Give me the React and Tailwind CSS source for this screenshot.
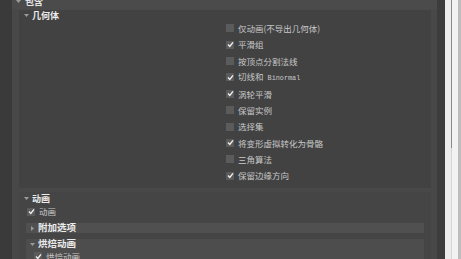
const cjk = { fontFamily: '"Noto Sans CJK SC", "Noto Sans", sans-serif' };

function Caret({ open }) {
  return (
    <svg width="5" height="5" viewBox="0 0 5 5" className="shrink-0">
      {open ? <path d="M0 1 L5 1 L2.5 4 Z" fill="#9a9a9a" /> : <path d="M1 0 L4 2.5 L1 5 Z" fill="#9a9a9a" />}
    </svg>
  );
}

function Box({ checked }) {
  return (
    <div className="w-[8px] h-[8px] bg-[#5b5b5b] flex items-center justify-center shrink-0">
      {checked && (
        <svg width="7" height="7" viewBox="0 0 7 7">
          <path d="M1 3.6 L2.8 5.4 L6 1.4" stroke="#f0f0f0" strokeWidth="1.4" fill="none" />
        </svg>
      )}
    </div>
  );
}

const options = [
  { label: "仅动画(不导出几何体)", checked: false },
  { label: "平滑组", checked: true },
  { label: "按顶点分割法线", checked: false },
  { label: "切线和", mono: "Binormal", checked: true },
  { label: "涡轮平滑", checked: true },
  { label: "保留实例", checked: false },
  { label: "选择集", checked: false },
  { label: "将变形虚拟转化为骨骼", checked: true },
  { label: "三角算法", checked: false },
  { label: "保留边缘方向", checked: true },
];

export default function App() {
  return (
    <div className="w-[461px] h-[259px] overflow-hidden bg-[#3a3a3a] flex" style={cjk}>
      <div className="w-[12px] shrink-0" />
      <div className="w-[425px] shrink-0 flex flex-col bg-[#484848] overflow-hidden">
        <div className="h-[15px] shrink-0 -mt-[6px] flex items-center pl-[4px] gap-[4px] text-[9px] font-bold text-[#e6e6e6] bg-[#4b4b4b]">
          <Caret open />
          <span className="leading-none">包含</span>
        </div>
        <div className="flex-1 min-h-0 flex flex-col pl-[7px] pr-[6px]">
          <div className="h-[179px] shrink-0 bg-[#424242] border-t border-[#4a4a4a] flex flex-col">
            <div className="h-[10px] shrink-0 flex items-center pl-[5px] gap-[3px] text-[9px] font-bold text-[#ececec]">
              <Caret open />
              <span className="leading-none">几何体</span>
            </div>
            <div className="flex flex-col pl-[207px]">
              {options.map((o) => (
                <div key={o.label} className="h-[16.4px] shrink-0 flex items-center gap-[4px] text-[8.5px] text-[#c8c8c8]">
                  <Box checked={o.checked} />
                  <span className="leading-none whitespace-nowrap">
                    {o.label}
                    {o.mono && (
                      <span className="text-[6.8px]" style={{ fontFamily: '"Liberation Mono", monospace' }}>
                        {" "}{o.mono}
                      </span>
                    )}
                  </span>
                </div>
              ))}
            </div>
          </div>
          <div className="mt-[4px] flex-1 min-h-0 overflow-hidden bg-[#454545] flex flex-col">
            <div className="h-[13px] shrink-0 flex items-center pl-[5px] gap-[3px] text-[9px] font-bold text-[#ececec]">
              <Caret open />
              <span className="leading-none">动画</span>
            </div>
            <div className="h-[13px] shrink-0 flex items-center pl-[8px] gap-[4px] text-[8.5px] text-[#c8c8c8]">
              <Box checked />
              <span className="leading-none">动画</span>
            </div>
            <div className="mt-[5px] ml-[7px] mr-[7px] h-[10px] shrink-0 bg-[#505050] flex items-center pl-[4px] gap-[3px] text-[9.5px] font-bold text-[#ececec]">
              <Caret />
              <span className="leading-none">附加选项</span>
            </div>
            <div className="mt-[6px] ml-[7px] mr-[7px] shrink-0 h-[40px] bg-[#4d4d4d] flex flex-col">
              <div className="h-[10px] shrink-0 flex items-center pl-[4px] gap-[3px] text-[9.5px] font-bold text-[#ececec]">
                <Caret open />
                <span className="leading-none">烘焙动画</span>
              </div>
              <div className="h-[14px] shrink-0 flex items-center pl-[8px] gap-[4px] text-[8.5px] text-[#c8c8c8]">
                <Box checked />
                <span className="leading-none">烘焙动画</span>
              </div>
            </div>
          </div>
        </div>
      </div>
      <div className="w-[8px] shrink-0 bg-[#3c3c3c]" />
      <div className="w-[16px] shrink-0 bg-[#e9e9e9] flex">
        <div className="w-[6px] bg-[#ececec]" />
        <div className="w-[1px] flex flex-col">
          <div className="h-[148px] bg-[#8a8a8a]" />
          <div className="flex-1 bg-[#d4d4d4]" />
        </div>
        <div className="w-[6px] bg-[#f2f2f2]" />
        <div className="flex-1 bg-[#bdbdbd]" />
      </div>
    </div>
  );
}
